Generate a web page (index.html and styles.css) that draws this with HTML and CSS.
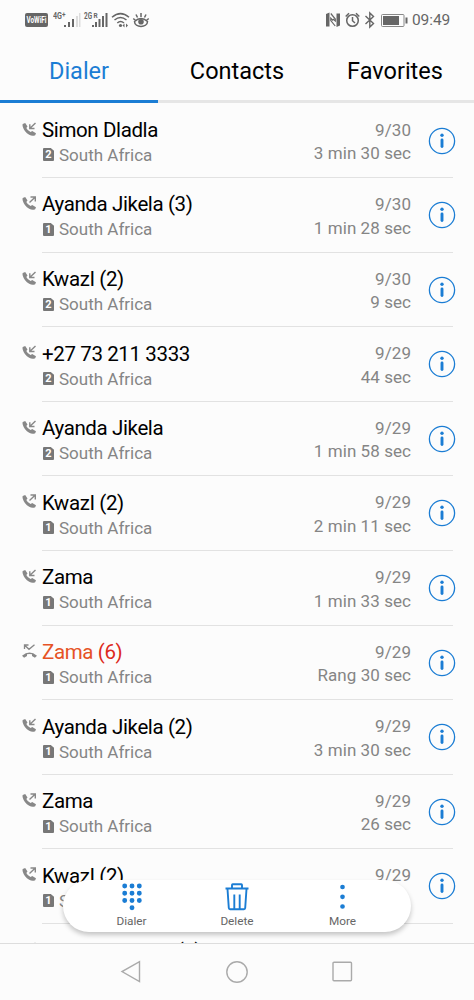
FILE: index.html
```html
<!DOCTYPE html>
<html lang="en">
<head>
<meta charset="utf-8">
<title>Dialer</title>
<link rel="stylesheet" href="styles.css">
</head>
<body>
<svg class="defs" width="0" height="0">
  <symbol id="handset" viewBox="0 0 15 15"><path d="M.7 1.900 3.200 .9 5.500 4.500 4.300 6Q5.700 8.800 8.600 10.100L10.200 9.100 14 11.200 13.200 13.200Q10.500 14.600 7.200 12.800 2.200 10 .7 4.600 .3 2.800 .7 1.900Z"/></symbol>
  <symbol id="in" viewBox="0 0 15 15"><use href="#handset" fill="#888"/><path d="M13.500 1 8 6.300M7.800 2.200V6.500H12.500" fill="none" stroke="#888" stroke-width="1.400"/></symbol>
  <symbol id="out" viewBox="0 0 15 15"><use href="#handset" fill="#888"/><path d="M7.500 6.500 13 1.200M8.500 1H13.300V5.600" fill="none" stroke="#888" stroke-width="1.400"/></symbol>
  <symbol id="missed" viewBox="0 0 15 15"><path d="M0 11.700Q7.500 5.500 15 11.700L12.900 13.700 10 12V10.200Q7.500 9.600 5 10.200V12L2.100 13.700Z" fill="#888"/><path d="M2.500 5V1H6.500M2.700 1.200 7 5.300 12.500 .7" fill="none" stroke="#888" stroke-width="1.300"/></symbol>
  <symbol id="card" viewBox="0 0 11 13"><path d="M1 0H7.800L11 2.800V12Q11 13 10 13H1Q0 13 0 12V1Q0 0 1 0Z" fill="#777"/></symbol>
  <symbol id="info" viewBox="0 0 28 28"><circle cx="14" cy="14" r="12.600" fill="none" stroke="#1b7dd4" stroke-width="1.300"/><circle cx="14" cy="8.300" r="1.700" fill="#1b7dd4"/><path d="M14 13V19.600" stroke="#1b7dd4" stroke-width="2.900" stroke-linecap="round"/></symbol>
</svg>
<div class="phone">
  <header class="status">
    <svg class="vowifi" width="23" height="14" viewBox="0 0 23 14"><rect width="23" height="14" rx="2" fill="#666"/><text x="1.500" y="10.300" textLength="20" lengthAdjust="spacingAndGlyphs">VoWiFi</text></svg>
    <svg class="signals" width="98" height="18" viewBox="0 0 98 18">
      <g fill="#666">
        <path d="M11 14h2v2h-2zM15 11h2v5h-2zM19 8h2v8h-2z"/><path d="M23 5h2v11h-2zM26 2h1.500v14h-1.500z" fill="#ddd"/>
        <path d="M39 14h2v2h-2zM42 11h2v5h-2zM45.500 8h2v8h-2zM49 5h2v11h-2zM52.500 2h2v14h-2z"/>
        <circle cx="67.500" cy="14.500" r="1.600"/><path d="M71.500 12.500v4l-2-2zM73 12.500v4l2-2z"/>
        <circle cx="88" cy="10.700" r="2.800"/>
      </g>
      <g fill="none" stroke="#666" stroke-width="1.500" transform="translate(-1 0)">
        <path d="M60 6.200Q68.500-1 77 6.200M62.500 9Q68.500 4 74.500 9M65.300 12Q68.500 9 72 12"/>
        <path d="M82.500 10.500Q89 4.500 95.500 10.500C95.500 17 82.500 17 82.500 10.500ZM89 2V6M84 3.500 85.500 6.500M94 3.500 92.500 6.500M81.300 7.500 83.500 9.500M96.700 7.500 94.500 9.500"/>
      </g>
      <text class="net" x="0" y="8" textLength="9" lengthAdjust="spacingAndGlyphs">4G</text><text class="net roam" x="9" y="5.500">+</text>
      <text class="net" x="31" y="8" textLength="8" lengthAdjust="spacingAndGlyphs">2G</text><text class="net roam" x="40.500" y="6.500">R</text>
    </svg>
    <svg class="sysicons" width="84" height="18" viewBox="0 0 84 18">
      <path d="M1 3 4.500 1.500V15.500L1 15.500ZM11.500 2.500 15 2.500V14.500L11.500 16Z" fill="#666"/><path d="M5.800 2.500 10.300 8V10L8 8M10.200 15 5.800 9.500V7.200L8 9.500" fill="none" stroke="#666" stroke-width="1.200"/>
      <g fill="none" stroke="#666" stroke-width="1.500"><circle cx="27.500" cy="9.500" r="5.800"/><path d="M27.500 6V9.700L30 12M20.700 5.500 24 2.300M34.300 5.500 31 2.300"/><path d="M40.500 5 48.500 12.500 44.800 16V2L48.500 5.500 40.500 13" stroke-width="1.400"/></g>
      <rect x="56.500" y="3.500" width="22.500" height="12" rx="1" fill="none" stroke="#888"/><path d="M58 5H74V14H58ZM80.500 6.500H82.500V12.500H80.500Z" fill="#666"/>
    </svg>
    <span class="clock">09:49</span>
  </header>
  <nav class="tabs"><a class="tab active">Dialer</a><a class="tab">Contacts</a><a class="tab">Favorites</a></nav>
  <main class="calls">
    <article class="call"><svg class="kind"><use href="#in"/></svg><div class="who"><div class="name">Simon Dladla</div><div class="place"><span class="sim"><svg><use href="#card"/></svg><b>2</b></span>South Africa</div></div><div class="when"><div>9/30</div><div>3 min 30 sec</div></div><svg class="info"><use href="#info"/></svg></article>
    <article class="call"><svg class="kind"><use href="#out"/></svg><div class="who"><div class="name">Ayanda Jikela (3)</div><div class="place"><span class="sim"><svg><use href="#card"/></svg><b>1</b></span>South Africa</div></div><div class="when"><div>9/30</div><div>1 min 28 sec</div></div><svg class="info"><use href="#info"/></svg></article>
    <article class="call"><svg class="kind"><use href="#in"/></svg><div class="who"><div class="name">KwazI (2)</div><div class="place"><span class="sim"><svg><use href="#card"/></svg><b>2</b></span>South Africa</div></div><div class="when"><div>9/30</div><div>9 sec</div></div><svg class="info"><use href="#info"/></svg></article>
    <article class="call"><svg class="kind"><use href="#in"/></svg><div class="who"><div class="name">+27 73 211 3333</div><div class="place"><span class="sim"><svg><use href="#card"/></svg><b>2</b></span>South Africa</div></div><div class="when"><div>9/29</div><div>44 sec</div></div><svg class="info"><use href="#info"/></svg></article>
    <article class="call"><svg class="kind"><use href="#in"/></svg><div class="who"><div class="name">Ayanda Jikela</div><div class="place"><span class="sim"><svg><use href="#card"/></svg><b>2</b></span>South Africa</div></div><div class="when"><div>9/29</div><div>1 min 58 sec</div></div><svg class="info"><use href="#info"/></svg></article>
    <article class="call"><svg class="kind"><use href="#out"/></svg><div class="who"><div class="name">KwazI (2)</div><div class="place"><span class="sim"><svg><use href="#card"/></svg><b>1</b></span>South Africa</div></div><div class="when"><div>9/29</div><div>2 min 11 sec</div></div><svg class="info"><use href="#info"/></svg></article>
    <article class="call"><svg class="kind"><use href="#in"/></svg><div class="who"><div class="name">Zama</div><div class="place"><span class="sim"><svg><use href="#card"/></svg><b>1</b></span>South Africa</div></div><div class="when"><div>9/29</div><div>1 min 33 sec</div></div><svg class="info"><use href="#info"/></svg></article>
    <article class="call"><svg class="kind"><use href="#missed"/></svg><div class="who"><div class="name missed">Zama <span class="count">(6)</span></div><div class="place"><span class="sim"><svg><use href="#card"/></svg><b>1</b></span>South Africa</div></div><div class="when"><div>9/29</div><div>Rang 30 sec</div></div><svg class="info"><use href="#info"/></svg></article>
    <article class="call"><svg class="kind"><use href="#in"/></svg><div class="who"><div class="name">Ayanda Jikela (2)</div><div class="place"><span class="sim"><svg><use href="#card"/></svg><b>1</b></span>South Africa</div></div><div class="when"><div>9/29</div><div>3 min 30 sec</div></div><svg class="info"><use href="#info"/></svg></article>
    <article class="call"><svg class="kind"><use href="#out"/></svg><div class="who"><div class="name">Zama</div><div class="place"><span class="sim"><svg><use href="#card"/></svg><b>1</b></span>South Africa</div></div><div class="when"><div>9/29</div><div>26 sec</div></div><svg class="info"><use href="#info"/></svg></article>
    <article class="call"><svg class="kind"><use href="#out"/></svg><div class="who"><div class="name">KwazI (2)</div><div class="place"><span class="sim"><svg><use href="#card"/></svg><b>1</b></span>South Africa</div></div><div class="when"><div>9/29</div><div></div></div><svg class="info"><use href="#info"/></svg></article>
    <article class="call last"><svg class="kind"><use href="#in"/></svg><div class="who"><div class="name">Mandi Madlala (2)</div></div></article>
  </main>
  <footer class="keys">
    <svg width="22" height="24" viewBox="0 0 22 24"><path d="M19.500 1.700V21.500L2 11.600Z"/></svg>
    <svg width="24" height="24" viewBox="0 0 24 24"><circle cx="12" cy="12" r="10.200"/></svg>
    <svg width="22" height="24" viewBox="0 0 22 24"><rect x="1" y="2.300" width="18.500" height="18.500" rx="1"/></svg>
  </footer>
  <div class="dock">
    <div class="action"><svg width="30" height="30" viewBox="0 0 30 30"><path d="M7.700 4h.01M15 4h.01M22.300 4h.01M7.700 11.300h.01M15 11.300h.01M22.300 11.300h.01M7.700 18.500h.01M15 18.500h.01M22.300 18.500h.01M15 25.800h.01" stroke="#1b7dd4" stroke-width="4.900" stroke-linecap="round"/></svg><span>Dialer</span></div>
    <div class="action"><svg width="30" height="30" viewBox="0 0 30 30"><path d="M3.500 6.500H26.500M10 6V3Q10 2.300 10.700 2.300H19.300Q20 2.300 20 3V6M5.500 7 6.800 26Q6.900 27.200 8 27.200H22Q23.100 27.200 23.200 26L24.500 7M12.300 12.500V26.500M17.700 12.500V26.500" fill="none" stroke="#1b7dd4" stroke-width="1.900"/></svg><span>Delete</span></div>
    <div class="action"><svg width="30" height="30" viewBox="0 0 30 30"><path d="M14.500 5h.01M14.500 14.800h.01M14.500 24.500h.01" stroke="#1b7dd4" stroke-width="4.700" stroke-linecap="round"/></svg><span>More</span></div>
  </div>
</div>
</body>
</html>
```
FILE: styles.css
```css
* { box-sizing: border-box; }
body { margin: 0; background: #fcfcfc; font-family: Roboto, sans-serif; }
.defs { position: absolute; }
.phone { position: relative; width: 474px; height: 1000px; display: flex; flex-direction: column; overflow: hidden; background: #fcfcfc; }
.status { height: 40px; display: flex; align-items: center; padding: 0 21px 0 25px; flex: none; }
.vowifi text { font: 700 8.5px Roboto, sans-serif; fill: #fff; }
.signals { margin-left: 5px; }
.net { font: 700 8.5px Roboto, sans-serif; fill: #666; }
.roam { font-size: 6.5px; }
.sysicons { margin-left: auto; }
.clock { width: 40px; margin-left: 3px; margin-right: 1px; font-size: 15.5px; letter-spacing: -.1px; color: #666; }
.tabs { height: 63px; flex: none; display: grid; grid-template-columns: repeat(3, 1fr); }
.tab { display: flex; align-items: center; justify-content: center; height: 63px; padding-top: 2px; font-size: 23.5px; color: #000; border-bottom: 3px solid #e6e6e6; }
.active { color: #1b7dd4; border-color: #1b7dd4; }
.calls { flex: 1; min-height: 0; overflow: hidden; padding: .5px 21px 0 22px; }
.call { display: grid; grid-template-columns: 20px 1fr auto 42px; height: 74.6px; position: relative; }
.kind { width: 15px; height: 15px; margin-top: 18px; }
.who, .when { border-bottom: 1px solid #e2e2e2; }
.name { margin-top: 14.4px; height: 25px; font-size: 20.5px; line-height: 25px; color: #000; letter-spacing: -.38px; white-space: nowrap; }
.last .name { margin-top: 14.6px; }
.last .kind { margin-top: 18px; }
.missed { color: #e65325; }
.count { color: #dd2a20; }
.place { display: flex; align-items: center; height: 24px; font-size: 17px; color: #858585; letter-spacing: 0; }
.sim { position: relative; width: 11px; height: 13px; margin: 0 5px 0 1px; flex: none; }
.sim svg { display: block; width: 11px; height: 13px; }
.sim b { position: absolute; inset: 0; font-size: 11px; line-height: 13px; text-align: center; color: #fff; letter-spacing: 0; }
.when { padding-top: 15px; text-align: right; font-size: 17px; line-height: 23.5px; color: #858585; letter-spacing: .06px; }
.info { width: 28px; height: 28px; margin: 23px 0 0 17px; }
.call::after { content: ""; position: absolute; right: 0; bottom: 0; width: 42px; height: 1px; background: #e2e2e2; }
.keys { height: 57px; flex: none; border-top: 1px solid #ddd; display: flex; justify-content: center; gap: 83px; align-items: center; }
.keys svg { fill: none; stroke: #aaa; stroke-width: 1.400; }
.dock { position: absolute; left: 63px; top: 880px; width: 348px; height: 52px; border-radius: 26px; background: #fff; box-shadow: 0 3px 5px rgba(0,0,0,.22); display: grid; grid-template-columns: repeat(3, 105.500px); justify-content: center; }
.action { display: flex; flex-direction: column; align-items: center; padding-top: 2px; font-size: 11.800px; line-height: 16px; color: #666; }
.action svg { flex: none; }
.action span { margin-top: 1px; }
```
